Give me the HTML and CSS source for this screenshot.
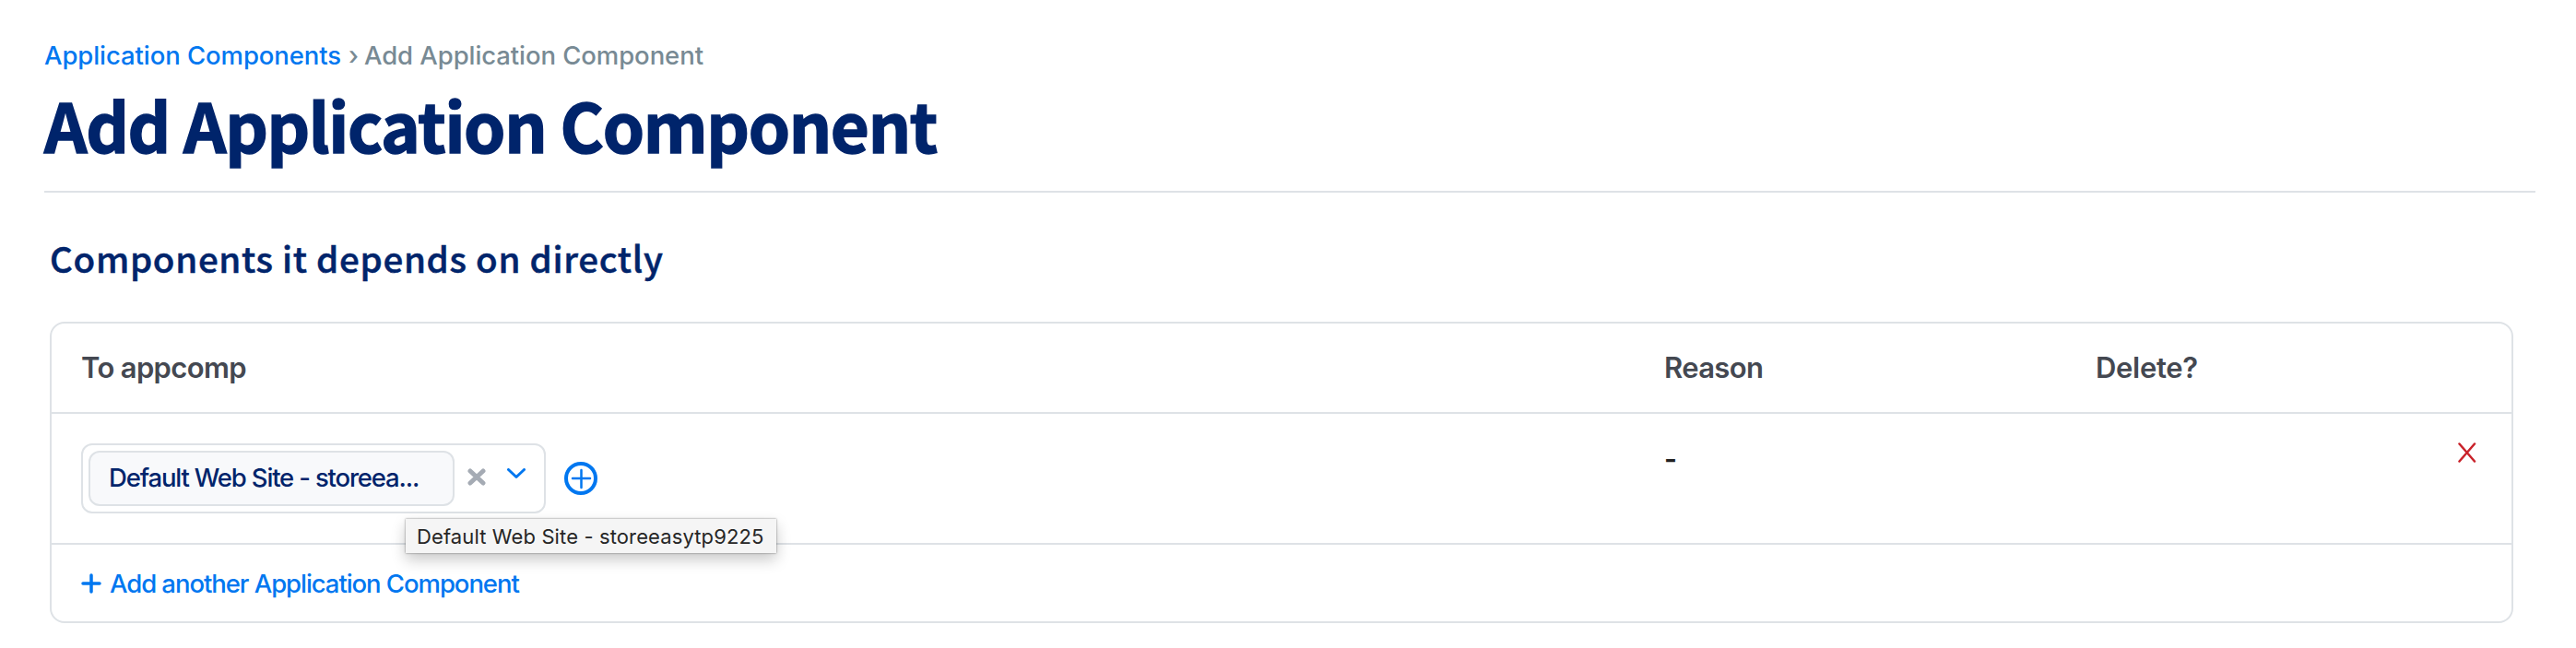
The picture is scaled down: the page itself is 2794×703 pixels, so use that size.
FILE: index.html
```html
<!DOCTYPE html>
<html lang="en">
<head>
<meta charset="utf-8">
<title>Add Application Component</title>
<link rel="stylesheet" href="styles.css">
</head>
<body>
<header class="page-header">
  <nav class="breadcrumb"><a class="crumb-link" href="#">Application Components</a><span class="crumb-sep">›</span><span class="crumb-current">Add Application Component</span></nav>
  <h1 class="title"><span>Add Application Component</span></h1>
</header>
<main class="section">
  <h2 class="subtitle"><span>Components it depends on directly</span></h2>
  <div class="table">
    <div class="row head">
      <span class="h-to">To appcomp</span><span class="h-reason">Reason</span><span class="h-delete">Delete?</span>
    </div>
    <div class="row body">
      <div class="field">
        <div class="select">
          <div class="chip"><span class="chip-text">Default Web Site - storeea...</span></div>
          <svg class="clear" viewBox="0 0 20 19"><path d="M3 3 17 16M17 3 3 16"/></svg>
          <svg class="chevron" viewBox="0 0 20 12"><path d="M1.5 1.5 10 9.500 18.500 1.500"/></svg>
          <div class="tooltip"><span class="tip-text">Default Web Site - storeeasytp9225</span></div>
        </div>
        <svg class="add" viewBox="0 0 36 36"><circle cx="18" cy="18" r="16"/><path d="M18.500 9v19M9 18h19"/></svg>
      </div>
      <span class="reason">-</span>
      <svg class="remove" viewBox="0 0 20 22"><path d="M1.500 1.500 18 20.500M18 1.500 1.500 20.500"/></svg>
    </div>
    <a class="row foot" href="#"><svg class="plus" viewBox="0 0 22 22"><path d="M11 2v18M2 11h18"/></svg><span class="foot-text">Add another Application Component</span></a>
  </div>
</main>
</body>
</html>
```
FILE: styles.css
```css
* { box-sizing: border-box; }
body { margin: 0; height: 703px; overflow: hidden; background: #fff; font-family: Inter, "Liberation Sans", sans-serif; white-space: nowrap; }
a { text-decoration: none; }
svg { display: block; flex: none; fill: none; stroke-linecap: round; }
h1, h2 { margin: 0; font-family: "Noto Sans CJK SC", "Noto Sans", sans-serif; color: #00246b; }
.page-header { margin: 0 44px 0 48px; height: 209px; border-bottom: 2px solid #dee2e6; padding-top: 40px; }
.breadcrumb { display: flex; height: 40px; line-height: 40px; font-size: 27.500px; font-weight: 500; letter-spacing: -0.080px; color: #788a94; }
.crumb-link { color: #0077f0; width: 330px; }
.crumb-sep { width: 17px; }
.title { height: 100px; margin-top: 5px; line-height: 100px; font-size: 72.500px; font-weight: 700; letter-spacing: -1.330px; -webkit-text-stroke: 1.500px #00246b; }
.section { margin: 0 68px 0 54px; }
.subtitle { padding-top: 40px; height: 140px; line-height: 60px; font-size: 38.500px; font-weight: 500; letter-spacing: 0.680px; -webkit-text-stroke: 0.500px #00246b; }
.table { height: 327px; border: 2px solid #dee2e6; border-radius: 16px; }
.row { display: grid; grid-template-columns: 1717px 468px 1fr; padding: 0 32px; }
.head { height: 98px; border-bottom: 2px solid #dee2e6; line-height: 96px; font-size: 31px; font-weight: 600; letter-spacing: -0.650px; color: #444851; }
.h-delete { letter-spacing: -0.300px; }
.body { height: 142px; border-bottom: 2px solid #dee2e6; }
.field { display: flex; margin-top: 32px; gap: 20px; }
.select { position: relative; display: flex; width: 504px; height: 76px; border: 2px solid #dee2e6; border-radius: 12px; padding: 6px; }
.chip { width: 397px; height: 60px; border: 2px solid #dee2e6; border-radius: 12px; background: #f8f9fb; padding-left: 20px; line-height: 55px; font-size: 27.500px; font-weight: 500; letter-spacing: -1.170px; color: #00246b; }
.clear { width: 20px; height: 19px; margin: 19px 0 0 14px; stroke: #a5abb4; stroke-width: 5; }
.chevron { width: 20px; height: 12px; margin: 19px 0 0 23px; stroke: #0077f0; stroke-width: 3; stroke-linejoin: round; }
.tooltip { position: absolute; left: 350px; top: 80px; width: 402px; height: 37px; background: #f5f5f5; padding-left: 12px; line-height: 39px; font-size: 22px; letter-spacing: 0.120px; color: #262626; box-shadow: 0 0 2px rgba(0,0,0,.5), 0 7px 16px rgba(0,0,0,.22); }
.add { width: 36px; height: 36px; margin-top: 20px; stroke: #0077f0; stroke-width: 4; }
.add path { stroke-width: 2.500; }
.reason { margin-top: 29px; line-height: 40px; font-size: 30px; font-weight: 600; color: #222; }
.remove { width: 20px; height: 22px; margin: 31px 6px 0 0; justify-self: end; stroke: #c9222a; stroke-width: 2.500; }
.foot { display: flex; height: 83px; color: #0077f0; line-height: 84px; font-size: 27.500px; font-weight: 500; letter-spacing: -1.060px; }
.plus { width: 22px; height: 22px; margin: 31px 9px 0 0; stroke: #0077f0; stroke-width: 3.500; }
```
